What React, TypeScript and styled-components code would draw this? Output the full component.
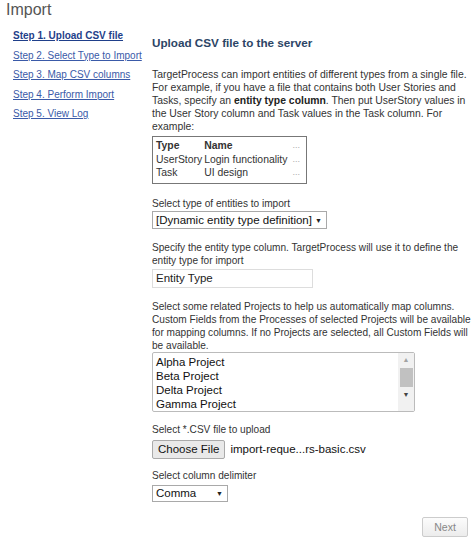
import styled, { createGlobalStyle } from "styled-components"

const GlobalStyle = createGlobalStyle`
  body {
    margin: 0;
    background: #fff;
    font-family: "Liberation Sans", Arial, sans-serif;
    color: #333;
  }
`

const steps = [
  "Step 1. Upload CSV file",
  "Step 2. Select Type to Import",
  "Step 3. Map CSV columns",
  "Step 4. Perform Import",
  "Step 5. View Log",
]

const projects = ["Alpha Project", "Beta Project", "Delta Project", "Gamma Project"]

export default function App() {
  return (
    <Page>
      <GlobalStyle />
      <Title>Import</Title>
      <Layout>
        <StepList>
          {steps.map((s, i) => (
            <StepLink key={s} $active={i === 0} href="#">
              {s}
            </StepLink>
          ))}
        </StepList>
        <Main>
          <Heading>Upload CSV file to the server</Heading>
          <Text>
            TargetProcess can import entities of different types from a single file.
            For example, if you have a file that contains both User Stories and
            Tasks, specify an <b>entity type column</b>. Then put UserStory values in
            the User Story column and Task values in the Task column. For
            example:
          </Text>
          <SampleTable>
            <tbody>
              <tr>
                <Th>Type</Th>
                <Th>Name</Th>
                <Dots>...</Dots>
              </tr>
              <tr>
                <Td>UserStory</Td>
                <Td>Login functionality</Td>
                <Dots>...</Dots>
              </tr>
              <tr>
                <Td>Task</Td>
                <Td>UI design</Td>
                <Dots>...</Dots>
              </tr>
            </tbody>
          </SampleTable>

          <Field $top={13}>
            <Label>Select type of entities to import</Label>
            <Dropdown $width={175} $height={18}>
              <span>[Dynamic entity type definition]</span>
              <Arrow>▼</Arrow>
            </Dropdown>
          </Field>

          <Field>
            <Label>
              Specify the entity type column. TargetProcess will use it to define the
              entity type for import
            </Label>
            <TextInput defaultValue="Entity Type" />
          </Field>

          <Field>
            <Label $gap={0}>
              Select some related Projects to help us automatically map columns.
              Custom Fields from the Processes of selected Projects will be available
              for mapping columns. If no Projects are selected, all Custom Fields will
              be available.
            </Label>
            <ListBox>
              <ListItems>
                {projects.map((p) => (
                  <ListItem key={p}>{p}</ListItem>
                ))}
              </ListItems>
              <ScrollBar>
                <ScrollArrow>▲</ScrollArrow>
                <ScrollThumb />
                <ScrollArrow $dark>▼</ScrollArrow>
              </ScrollBar>
            </ListBox>
          </Field>

          <Field $top={11}>
            <Label $gap={4}>Select *.CSV file to upload</Label>
            <FileRow>
              <FileButton>Choose File</FileButton>
              <span>import-reque...rs-basic.csv</span>
            </FileRow>
          </Field>

          <Field $top={10}>
            <Label $gap={3}>Select column delimiter</Label>
            <Dropdown $width={76} $height={17}>
              <span>Comma</span>
              <Arrow>▼</Arrow>
            </Dropdown>
          </Field>

          <Footer>
            <NextButton disabled>Next</NextButton>
          </Footer>
        </Main>
      </Layout>
    </Page>
  )
}

const Page = styled.div`
  width: 474px;
  height: 545px;
  overflow: hidden;
`

const Title = styled.h1`
  margin: 0;
  padding: 1px 0 0 6px;
  font-size: 16px;
  font-weight: normal;
  line-height: 18px;
  color: #555;
`

const Layout = styled.div`
  display: flex;
`

const StepList = styled.div`
  width: 139px;
  flex-shrink: 0;
  padding: 10px 0 0 13px;
  display: flex;
  flex-direction: column;
  gap: 6.6px;
`

const StepLink = styled.a<{ $active?: boolean }>`
  font-size: 10px;
  line-height: 13px;
  white-space: nowrap;
  color: ${(p) => (p.$active ? "#1f3f8a" : "#3a5aa8")};
  font-weight: ${(p) => (p.$active ? "bold" : "normal")};
  text-decoration: underline;
`

const Main = styled.div`
  width: 322px;
  padding-top: 17px;
  display: flex;
  flex-direction: column;
  align-items: flex-start;
  font-size: 10.1px;
  line-height: 13px;
  color: #333;
`

const Heading = styled.h2`
  margin: 0 0 18px;
  font-size: 11.7px;
  line-height: 14px;
  font-weight: bold;
  color: #2c4566;
`

const Text = styled.p`
  margin: 0 0 3px;
  font-size: 10.4px;
  b {
    color: #222;
  }
`

const SampleTable = styled.table`
  border: 1px solid #777;
  border-collapse: separate;
  border-spacing: 0;
  padding: 2px 3px 3px;
  font-size: 10.4px;
`

const Th = styled.td`
  font-weight: bold;
  padding: 0 2px 0 0;
  line-height: 13.5px;
`

const Td = styled.td`
  padding: 0 2px 0 0;
  line-height: 13.5px;
`

const Dots = styled.td`
  color: #aaa;
  padding: 0 3px 0 3px;
  font-size: 9px;
  line-height: 13.5px;
`

const Field = styled.div<{ $top?: number }>`
  margin-top: ${(p) => p.$top ?? 12}px;
  display: flex;
  flex-direction: column;
  align-items: flex-start;
`

const Label = styled.div<{ $gap?: number }>`
  margin-bottom: ${(p) => p.$gap ?? 1.5}px;
`

const Dropdown = styled.div<{ $width: number; $height: number }>`
  width: ${(p) => p.$width}px;
  height: ${(p) => p.$height}px;
  box-sizing: border-box;
  border: 1px solid #a9a9a9;
  padding: 0 4px 0 3px;
  display: flex;
  align-items: center;
  justify-content: space-between;
  font-size: 11.5px;
  color: #111;
`

const Arrow = styled.span`
  font-size: 7px;
  color: #222;
`

const TextInput = styled.input`
  width: 161px;
  height: 19px;
  box-sizing: border-box;
  border: 1px solid #ddd;
  padding: 0 3px;
  font-family: "Liberation Sans", Arial, sans-serif;
  font-size: 11.5px;
  color: #222;
`

const ListBox = styled.div`
  width: 263px;
  height: 60px;
  box-sizing: border-box;
  border: 1px solid #bbb;
  border-radius: 2px;
  display: flex;
`

const ListItems = styled.div`
  flex: 1;
  padding: 2px 3px;
`

const ListItem = styled.div`
  font-size: 11.5px;
  line-height: 14px;
  color: #111;
`

const ScrollBar = styled.div`
  width: 16px;
  background: #f1f1f1;
  display: flex;
  flex-direction: column;
  align-items: center;
`

const ScrollArrow = styled.div<{ $dark?: boolean }>`
  height: 14px;
  font-size: 7px;
  line-height: 14px;
  color: ${(p) => (p.$dark ? "#444" : "#a3a3a3")};
`

const ScrollThumb = styled.div`
  width: 13px;
  flex: 1;
  margin: 1px 0;
  background: #c1c1c1;
  max-height: 19px;
`

const FileRow = styled.div`
  display: flex;
  align-items: center;
  gap: 5px;
  font-size: 11.5px;
  color: #111;
`

const FileButton = styled.button`
  height: 19px;
  padding: 0 5px;
  border: 1px solid #aaa;
  border-radius: 2px;
  background: #e9e9e9;
  font-family: "Liberation Sans", Arial, sans-serif;
  font-size: 11.5px;
  color: #111;
`

const Footer = styled.div`
  align-self: stretch;
  display: flex;
  justify-content: flex-end;
  padding-right: 6px;
  margin-top: 15px;
`

const NextButton = styled.button`
  width: 46px;
  height: 20px;
  border: 1px solid #ccc;
  border-radius: 2px;
  background: linear-gradient(#fcfcfc, #ececec);
  font-family: "Liberation Sans", Arial, sans-serif;
  font-size: 10.5px;
  color: #888;
`
